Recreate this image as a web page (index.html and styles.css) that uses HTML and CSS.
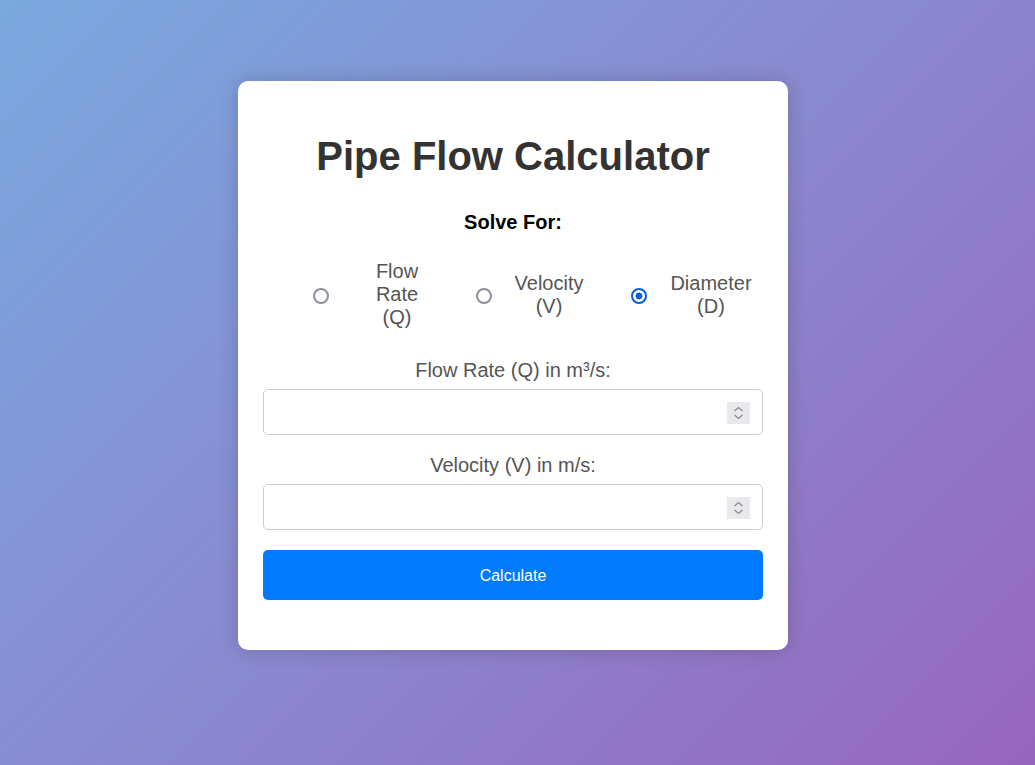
FILE: index.html
```html
<!DOCTYPE html>
<html lang="en">
<head>
<meta charset="utf-8">
<title>Pipe Flow Calculator</title>
<link rel="stylesheet" href="styles.css">
</head>
<body>
  <div class="card">
    <h1 class="title">Pipe Flow Calculator</h1>
    <div class="solve-label">Solve For:</div>
    <div class="radio-group">
      <label class="option">
        <input type="radio" name="solve" value="Q" class="radio">
        <span class="option-text">Flow Rate (Q)</span>
      </label>
      <label class="option">
        <input type="radio" name="solve" value="V" class="radio">
        <span class="option-text">Velocity (V)</span>
      </label>
      <label class="option">
        <input type="radio" name="solve" value="D" class="radio" checked>
        <span class="option-text">Diameter (D)</span>
      </label>
    </div>
    <div class="field">
      <label class="field-label" for="q">Flow Rate (Q) in m³/s:</label>
      <div class="input-wrap">
        <input class="field-input" type="number" id="q">
        <span class="spinner" aria-hidden="true">
          <svg width="23" height="22" viewBox="0 0 23 22"><path d="M7.5 9 L11.5 5.5 L15.5 9" fill="none" stroke="#8a8a96" stroke-width="1.3"/><path d="M7.5 13 L11.5 16.5 L15.5 13" fill="none" stroke="#8a8a96" stroke-width="1.3"/></svg>
        </span>
      </div>
    </div>
    <div class="field">
      <label class="field-label" for="v">Velocity (V) in m/s:</label>
      <div class="input-wrap">
        <input class="field-input" type="number" id="v">
        <span class="spinner" aria-hidden="true">
          <svg width="23" height="22" viewBox="0 0 23 22"><path d="M7.5 9 L11.5 5.5 L15.5 9" fill="none" stroke="#8a8a96" stroke-width="1.3"/><path d="M7.5 13 L11.5 16.5 L15.5 13" fill="none" stroke="#8a8a96" stroke-width="1.3"/></svg>
        </span>
      </div>
    </div>
    <button class="calc-btn" type="button">Calculate</button>
  </div>
</body>
</html>
```

FILE: styles.css
```css
html, body {
  margin: 0;
  padding: 0;
}

body {
  min-height: 100vh;
  box-sizing: border-box;
  display: flex;
  justify-content: center;
  align-items: flex-start;
  padding: 81px 9px 0 0;
  font-family: "Liberation Sans", Arial, sans-serif;
  background: linear-gradient(135deg, #79a9de 0%, #8a89cf 50%, #9766bd 100%);
}

.card {
  width: 550px;
  box-sizing: border-box;
  padding: 25px 25px 50px;
  background: #ffffff;
  border-radius: 10px;
  box-shadow: 0 0 20px rgba(0, 0, 0, 0.18);
  text-align: center;
}

.title {
  margin: 27px 0 32px;
  font-size: 40px;
  line-height: 46px;
  font-weight: bold;
  color: #333333;
}

.solve-label {
  font-size: 20px;
  line-height: 23px;
  font-weight: bold;
  color: #000000;
  margin-bottom: 26px;
}

.radio-group {
  display: flex;
  align-items: center;
  padding-left: 50px;
  margin-bottom: 30px;
}

.option {
  display: flex;
  align-items: center;
  font-size: 20px;
  line-height: 23px;
  color: #555555;
}

.option:nth-child(2) { margin-left: 44px; }
.option:nth-child(3) { margin-left: 40px; }

.radio {
  -webkit-appearance: none;
  appearance: none;
  box-sizing: border-box;
  width: 16px;
  height: 16px;
  margin: 2px 0 0;
  flex: none;
  border: 2px solid #8f8f9d;
  border-radius: 50%;
  background: #ffffff;
}

.radio:checked {
  border-color: #0060df;
  background: radial-gradient(circle, #0060df 0 3.2px, #ffffff 3.8px);
}

.option-text {
  text-align: center;
}

.option:nth-child(1) .option-text { width: 70px; margin-left: 33px; }
.option:nth-child(2) .option-text { width: 84px; margin-left: 15px; }
.option:nth-child(3) .option-text { width: 84px; margin-left: 22px; }

.field {
  margin-bottom: 19px;
}

.field-label {
  display: block;
  font-size: 20px;
  line-height: 23px;
  color: #555555;
  margin-bottom: 7px;
}

.input-wrap {
  position: relative;
}

.field-input {
  display: block;
  width: 100%;
  height: 46px;
  box-sizing: border-box;
  padding: 10px;
  border: 1px solid #cccccc;
  border-radius: 5px;
  font-family: "Liberation Sans", Arial, sans-serif;
  font-size: 16px;
  background: #ffffff;
  -moz-appearance: textfield;
}

.field-input::-webkit-inner-spin-button,
.field-input::-webkit-outer-spin-button {
  -webkit-appearance: none;
  margin: 0;
}

.spinner {
  position: absolute;
  top: 13px;
  right: 13px;
  width: 23px;
  height: 22px;
  background: #e9e9ed;
  display: flex;
  pointer-events: none;
}

.calc-btn {
  display: block;
  width: 100%;
  height: 50px;
  margin-top: 20px;
  border: none;
  border-radius: 5px;
  background: #007bff;
  color: #ffffff;
  font-family: "Liberation Sans", Arial, sans-serif;
  font-size: 16px;
  padding-top: 2px;
  cursor: pointer;
}
```
